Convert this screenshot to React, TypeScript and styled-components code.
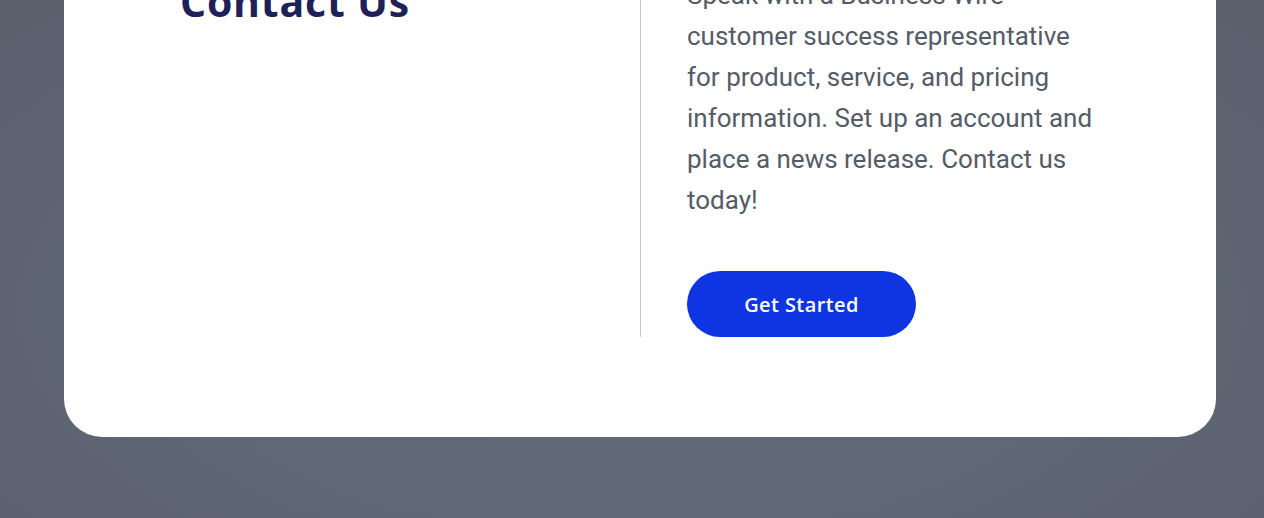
import styled, { createGlobalStyle } from "styled-components";
import React from "react";

const GlobalStyle = createGlobalStyle`
  html, body {
    margin: 0;
    padding: 0;
  }
  body {
    background: radial-gradient(ellipse at 50% 60%, #636b79 0%, #5f6674 55%, #5a5f6c 100%);
    min-height: 518px;
    overflow: hidden;
  }
`;

const Page = styled.div`
  padding: 0 48px 81px 64px;
  height: 518px;
  box-sizing: border-box;
`;

const Card = styled.section`
  margin-top: -125px;
  background: #fff;
  border-radius: 0 0 38px 38px;
  padding: 100px 0 100px;
  display: grid;
  grid-template-columns: 577px 1fr;
`;

const LeftCol = styled.div`
  padding-left: 116px;
  border-right: 1px solid #c3c6cd;
`;

const RightCol = styled.div`
  padding-left: 46px;
`;

const Heading = styled.h2`
  margin: 2px 0 0;
  font-family: "Open Sans", "Inter", sans-serif;
  font-weight: 700;
  font-size: 41px;
  line-height: 48px;
  letter-spacing: 0.8px;
  color: #1e2157;
`;

const Body = styled.p`
  margin: 0;
  max-width: 470px;
  font-family: Roboto, "Liberation Sans", sans-serif;
  font-size: 26px;
  line-height: 41px;
  color: #555b67;
`;

const CtaButton = styled.button`
  margin-top: 50px;
  width: 229px;
  height: 66px;
  border: none;
  border-radius: 33px;
  background: #0e35e1;
  color: #fff;
  font-family: "Open Sans", "Inter", sans-serif;
  font-weight: 600;
  font-size: 20px;
  letter-spacing: 0.4px;
  cursor: pointer;
  display: block;
`;

export default function App() {
  return (
    <>
      <GlobalStyle />
      <Page>
        <Card>
          <LeftCol>
            <Heading>Contact Us</Heading>
          </LeftCol>
          <RightCol>
            <Body>
              Speak with a Business Wire
              <br />
              customer success representative
              <br />
              for product, service, and pricing
              <br />
              information. Set up an account and
              <br />
              place a news release. Contact us
              <br />
              today!
            </Body>
            <CtaButton>Get Started</CtaButton>
          </RightCol>
        </Card>
      </Page>
    </>
  );
}
